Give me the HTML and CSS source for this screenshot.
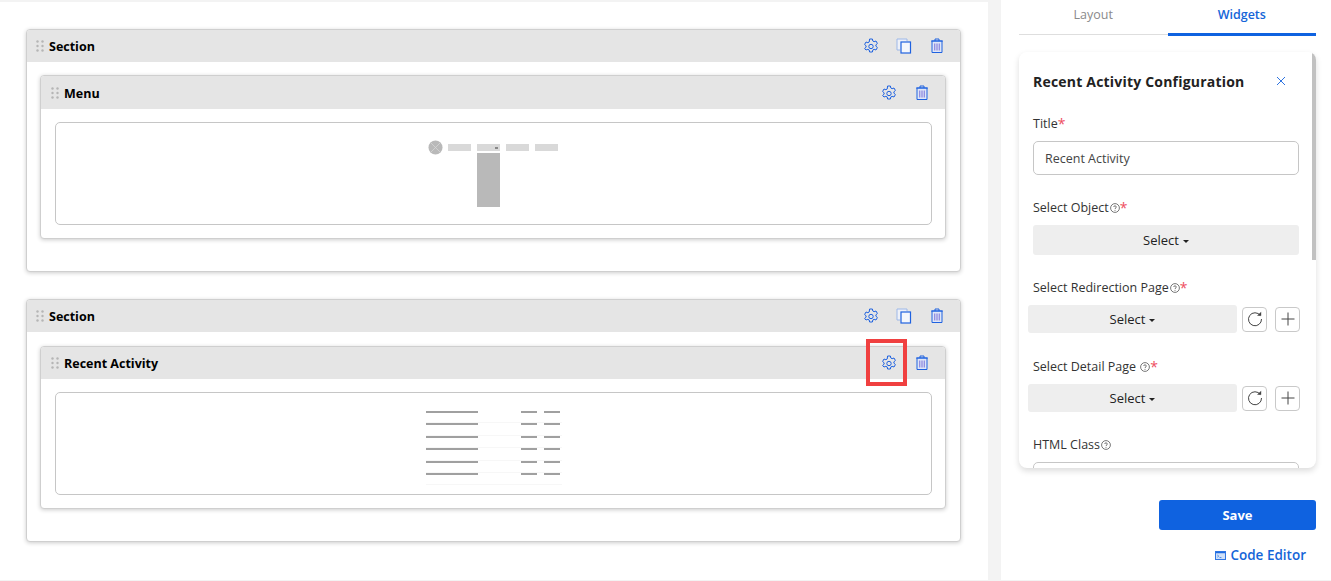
FILE: index.html
```html
<!DOCTYPE html>
<html lang="en">
<head>
  <meta charset="UTF-8">
  <title>Page Builder</title>
  <link rel="stylesheet" href="styles.css">
</head>
<body>
  <svg class="defs" width="0" height="0">
    <symbol id="gear" viewBox="0 0 16 16">
      <path fill="none" stroke="currentColor" stroke-width="1" stroke-linejoin="round" d="M6.600 1h2.800l.4 2 1.300.7 1.900-.7 1.400 2.500-1.500 1.300v1.400l1.500 1.300-1.400 2.500-1.900-.7-1.300.7-.4 2H6.600l-.4-2-1.300-.7-1.900.7L1.600 10.500l1.500-1.300V7.800L1.600 6.500 3 4l1.900.7 1.300-.7z"/>
      <circle cx="8" cy="8.500" r="2.200" fill="none" stroke="currentColor" stroke-width="1"/>
    </symbol>
    <symbol id="copy" viewBox="0 0 16 16">
      <path fill="#eef1f8" stroke="#9db8e8" stroke-width="1" d="M11 3V1H1v11h3"/>
      <rect x="5" y="4" width="9.500" height="11" fill="#f4f7fc" stroke="currentColor" stroke-width="1.200"/>
    </symbol>
    <symbol id="trash" viewBox="0 0 14 16">
      <path fill="#dfe6f7" stroke="currentColor" stroke-width="1" d="M2 3v11.500h10V3z"/>
      <path fill="none" stroke="currentColor" stroke-width="1" d="M1 3h12M5 3V1h4v2"/>
      <path fill="none" stroke="#8f8be0" stroke-width="1.300" d="M4.700 5.500v7M7 5.500v7M9.300 5.500v7"/>
    </symbol>
    <symbol id="grip" viewBox="0 0 8 12">
      <g fill="#b5b5b5">
        <circle cx="1.500" cy="1.500" r="1.200"/><circle cx="6.500" cy="1.500" r="1.200"/>
        <circle cx="1.500" cy="6" r="1.200"/><circle cx="6.500" cy="6" r="1.200"/>
        <circle cx="1.500" cy="10.500" r="1.200"/><circle cx="6.500" cy="10.500" r="1.200"/>
      </g>
    </symbol>
    <symbol id="help" viewBox="0 0 10 10">
      <circle cx="5" cy="5" r="4.400" fill="none" stroke="#555" stroke-width=".8"/>
      <path fill="none" stroke="#555" stroke-width=".8" d="M3.700 4c0-1.600 2.600-1.600 2.600 0 0 1-1.300 1-1.300 2"/>
      <circle cx="5" cy="7.300" r=".5" fill="#555"/>
    </symbol>
    <symbol id="refresh" viewBox="0 0 16 16">
      <path fill="none" stroke="#444" stroke-width="1" d="M13.300 4.500A6.500 6.500 0 1 0 14.500 8"/>
      <path fill="#444" d="M10 4.800h4.200V.8z"/>
    </symbol>
    <symbol id="plus" viewBox="0 0 16 16">
      <path fill="none" stroke="#444" stroke-width="1" d="M8 1.500v13M1.500 8h13"/>
    </symbol>
  </svg>

  <div class="page">
    <main class="canvas">
      <section class="block">
        <div class="block-head">
          <svg class="grip"><use href="#grip"/></svg>
          <span class="block-title">Section</span>
          <div class="block-tools">
            <svg class="tool"><use href="#gear"/></svg>
            <svg class="tool"><use href="#copy"/></svg>
            <svg class="tool"><use href="#trash"/></svg>
          </div>
        </div>
        <div class="block-body">
          <div class="block widget">
            <div class="block-head">
              <svg class="grip"><use href="#grip"/></svg>
              <span class="block-title">Menu</span>
              <div class="block-tools">
                <svg class="tool"><use href="#gear"/></svg>
                <svg class="tool"><use href="#trash"/></svg>
              </div>
            </div>
            <div class="widget-body">
              <div class="preview">
                <div class="menu-preview">
                  <svg class="menu-logo" viewBox="0 0 16 16">
                    <circle cx="8" cy="8" r="7.500" fill="#b9b9b9"/>
                    <path stroke="#d8d8d8" stroke-width=".8" d="M3 3l10 10M13 3L3 13"/>
                  </svg>
                  <span class="menu-item"></span>
                  <div class="menu-drop">
                    <span class="menu-item has-caret"></span>
                    <span class="menu-list"></span>
                  </div>
                  <span class="menu-item"></span>
                  <span class="menu-item"></span>
                </div>
              </div>
            </div>
          </div>
        </div>
      </section>

      <section class="block">
        <div class="block-head">
          <svg class="grip"><use href="#grip"/></svg>
          <span class="block-title">Section</span>
          <div class="block-tools">
            <svg class="tool"><use href="#gear"/></svg>
            <svg class="tool"><use href="#copy"/></svg>
            <svg class="tool"><use href="#trash"/></svg>
          </div>
        </div>
        <div class="block-body">
          <div class="block widget widget-low">
            <div class="block-head">
              <svg class="grip"><use href="#grip"/></svg>
              <span class="block-title">Recent Activity</span>
              <div class="block-tools">
                <span class="marked"><svg class="tool"><use href="#gear"/></svg></span>
                <svg class="tool"><use href="#trash"/></svg>
              </div>
            </div>
            <div class="widget-body">
              <div class="preview">
                <div class="activity-preview">
                  <div class="activity-row"><i class="line-long"></i><i class="line-short"></i><i class="line-short"></i></div>
                  <div class="activity-row"><i class="line-long"></i><i class="line-short"></i><i class="line-short"></i></div>
                  <div class="activity-row"><i class="line-long"></i><i class="line-short"></i><i class="line-short"></i></div>
                  <div class="activity-row"><i class="line-long"></i><i class="line-short"></i><i class="line-short"></i></div>
                  <div class="activity-row"><i class="line-long"></i><i class="line-short"></i><i class="line-short"></i></div>
                  <div class="activity-row"><i class="line-long"></i><i class="line-short"></i><i class="line-short"></i></div>
                </div>
              </div>
            </div>
          </div>
        </div>
      </section>
    </main>

    <aside class="side">
      <div class="tabs">
        <div class="tab">Layout</div>
        <div class="tab active">Widgets</div>
      </div>

      <div class="config">
        <span class="scroll-thumb"></span>
        <div class="config-head">
          <h2>Recent Activity Configuration</h2>
          <svg class="close" viewBox="0 0 10 10"><path fill="none" stroke="#2f74e0" stroke-width="1" d="M1 1l8 8M9 1L1 9"/></svg>
        </div>

        <div class="field">
          <label>Title<em>*</em></label>
          <input class="text-input" type="text" value="Recent Activity">
        </div>
        <div class="field">
          <label>Select Object<svg class="help"><use href="#help"/></svg><em>*</em></label>
          <button class="select-btn">Select<b class="caret"></b></button>
        </div>
        <div class="field field-page">
          <label>Select Redirection Page<svg class="help"><use href="#help"/></svg><em>*</em></label>
          <div class="select-row">
            <button class="select-btn">Select<b class="caret"></b></button>
            <span class="square-btn"><svg><use href="#refresh"/></svg></span>
            <span class="square-btn"><svg><use href="#plus"/></svg></span>
          </div>
        </div>
        <div class="field field-page">
          <label>Select Detail Page <svg class="help"><use href="#help"/></svg><em>*</em></label>
          <div class="select-row">
            <button class="select-btn">Select<b class="caret"></b></button>
            <span class="square-btn"><svg><use href="#refresh"/></svg></span>
            <span class="square-btn"><svg><use href="#plus"/></svg></span>
          </div>
        </div>
        <div class="field field-class">
          <label>HTML Class<svg class="help"><use href="#help"/></svg></label>
          <input class="text-input" type="text">
        </div>
      </div>

      <div class="side-foot">
        <button class="save-btn">Save</button>
        <a class="code-link">
          <svg viewBox="0 0 12 10"><rect x=".5" y=".5" width="11" height="9" fill="#cfe0f8" stroke="#1d6ae0"/><path fill="#1d6ae0" d="M1 1h10v1.500H1z"/><path fill="none" stroke="#1d6ae0" stroke-width=".8" d="M2.500 4.500l1.500 1.200-1.500 1.200M5 7.300h2"/></svg>
          Code Editor
        </a>
      </div>
    </aside>
  </div>
</body>
</html>
```

FILE: styles.css
```css
* {
  box-sizing: border-box;
}

html, body {
  margin: 0;
  padding: 0;
  height: 581px;
  overflow: hidden;
  font-family: 'Open Sans', sans-serif;
  background: #f3f3f3;
  color: #333333;
}

.defs {
  position: absolute;
}

.page {
  display: flex;
  height: 580px;
  padding-top: 2px;
  gap: 13px;
}

/* left canvas */
.canvas {
  flex: none;
  width: 988px;
  background: #ffffff;
  padding: 27px 27px 0 26px;
}

.block {
  background: #ffffff;
  border: 1px solid #cfcfcf;
  border-radius: 4px;
  box-shadow: 0 1px 4px rgba(0, 0, 0, 0.2);
  margin-bottom: 27px;
}

.block-head {
  display: flex;
  align-items: center;
  height: 32px;
  padding: 0 15px 0 9px;
  background: #e5e5e5;
  border-radius: 3px 3px 0 0;
}

.grip {
  width: 8px;
  height: 12px;
  margin-right: 5px;
}

.block-title {
  font-size: 12.500px;
  font-weight: 700;
  color: #000000;
}

.block-tools {
  display: flex;
  align-items: center;
  gap: 17px;
  margin-left: auto;
  color: #1f62e0;
}

.tool {
  display: block;
  width: 16px;
  height: 16px;
}

.block-body {
  padding: 13px 14px 32px 13px;
  height: 209px;
}

.widget {
  margin-bottom: 0;
}

.widget .block-head {
  height: 33px;
  padding-top: 1px;
  padding-left: 10px;
}

.widget-low {
  margin-top: 1px;
}

.widget-low .block-head {
  height: 32px;
  padding-top: 0;
}

.widget-body {
  padding: 13px 13px 13px 14px;
}

.preview {
  display: flex;
  justify-content: center;
  height: 103px;
  border: 1px solid #c6c6c6;
  border-radius: 5px;
}

.marked {
  position: relative;
  display: block;
}

.marked::after {
  content: '';
  position: absolute;
  left: -15px;
  top: -16px;
  width: 33px;
  height: 39px;
  border: 4px solid #f04040;
}

/* menu thumbnail */
.menu-preview {
  display: flex;
  align-items: flex-start;
  gap: 6px;
  padding-top: 17px;
  margin-left: -1px;
}

.menu-logo {
  width: 15px;
  height: 15px;
  margin-right: -1px;
}

.menu-item {
  display: block;
  position: relative;
  width: 23px;
  height: 7px;
  margin-top: 4px;
  background: #d9d9d9;
}

.has-caret::after {
  content: '';
  position: absolute;
  right: 2px;
  top: 3px;
  width: 3px;
  height: 2px;
  background: #888888;
}

.menu-list {
  display: block;
  width: 23px;
  height: 54px;
  margin-top: 2px;
  background: #b9b9b9;
}

/* activity thumbnail */
.activity-preview {
  padding-top: 18px;
  margin-left: 1px;
}

.activity-row {
  display: flex;
  width: 136px;
  height: 12.400px;
  border-bottom: 1px solid #f7f7f7;
  align-items: flex-start;
}

.activity-row i {
  display: block;
  flex: none;
  height: 2px;
  background: #a0a0a0;
}

.line-long {
  width: 52px;
  margin-right: 43px;
}

.line-short {
  width: 16px;
  margin-right: 7px;
}

/* right panel */
.side {
  flex: none;
  width: 330px;
  background: #ffffff;
  padding: 0 15px 0 18px;
  margin-top: -2px;
}

.tabs {
  display: flex;
  height: 35px;
  border-bottom: 1px solid #dedede;
  margin-bottom: 17px;
}

.tab {
  flex: 1;
  text-align: center;
  font-size: 12.500px;
  line-height: 30px;
  color: #8a8a8a;
}

.tab.active {
  height: 36px;
  font-weight: 600;
  color: #1565d8;
  border-bottom: 3px solid #0f62e0;
}

.config {
  position: relative;
  height: 416px;
  overflow: hidden;
  padding: 0 17px 0 14px;
  border-radius: 8px;
  background: #ffffff;
  box-shadow: 0 3px 6px rgba(0, 0, 0, 0.14);
}

.scroll-thumb {
  position: absolute;
  right: 0;
  top: 0;
  width: 4px;
  height: 208px;
  background: #c1c1c1;
}

.config-head {
  display: flex;
  align-items: center;
  justify-content: space-between;
  height: 61px;
  padding: 0 13px 3px 0;
}

.config-head h2 {
  margin: 0;
  font-size: 14px;
  font-weight: 700;
  letter-spacing: 0.2px;
  color: #222222;
}

.close {
  width: 10px;
  height: 10px;
}

.field {
  margin-bottom: 22px;
}

.field label {
  display: block;
  height: 20px;
  font-size: 12.500px;
  line-height: 22px;
  color: #333333;
}

.field em {
  font-style: normal;
  font-size: 14px;
  color: #ee4d5f;
  vertical-align: -1px;
}

.help {
  width: 10px;
  height: 10px;
  margin-left: 1px;
  vertical-align: -1px;
}

.text-input {
  display: block;
  width: 100%;
  height: 34px;
  margin-top: 8px;
  padding: 0 11px;
  font-family: inherit;
  font-size: 12.500px;
  color: #444444;
  background: #ffffff;
  border: 1px solid #c6c6c6;
  border-radius: 5px;
}

.select-btn {
  display: block;
  width: 100%;
  height: 30px;
  margin-top: 8px;
  font-family: inherit;
  font-size: 13px;
  color: #222222;
  background: #eeeeee;
  border: none;
  border-radius: 3px;
}

.caret {
  display: inline-block;
  margin-left: 4px;
  vertical-align: 2px;
  border-top: 3px solid #222222;
  border-left: 3px solid transparent;
  border-right: 3px solid transparent;
}

.field-page {
  margin-bottom: 23px;
}

.field-class {
  margin-top: -1px;
}

.select-row {
  display: flex;
  align-items: center;
  gap: 5px;
  margin-top: 8px;
  margin-left: -5px;
  width: 272px;
}

.select-row .select-btn {
  flex: none;
  width: 209px;
  height: 28px;
  margin: 0;
}

.square-btn {
  display: flex;
  flex: none;
  align-items: center;
  justify-content: center;
  width: 25px;
  height: 25px;
  border: 1px solid #c9c9c9;
  border-radius: 4px;
}

.square-btn + .square-btn {
  margin-left: 3px;
}

.square-btn svg {
  width: 16px;
  height: 16px;
}

.side-foot {
  display: flex;
  flex-direction: column;
  align-items: flex-end;
  padding-top: 32px;
}

.save-btn {
  width: 157px;
  height: 30px;
  padding-bottom: 2px;
  font-family: inherit;
  font-size: 13px;
  font-weight: 700;
  color: #ffffff;
  background: #0f62e0;
  border: none;
  border-radius: 3px;
}

.code-link {
  display: flex;
  align-items: center;
  gap: 4px;
  margin-top: 16px;
  margin-right: 10px;
  font-size: 13.500px;
  font-weight: 600;
  color: #1565d8;
}

.code-link svg {
  width: 11px;
  height: 9px;
}
```
